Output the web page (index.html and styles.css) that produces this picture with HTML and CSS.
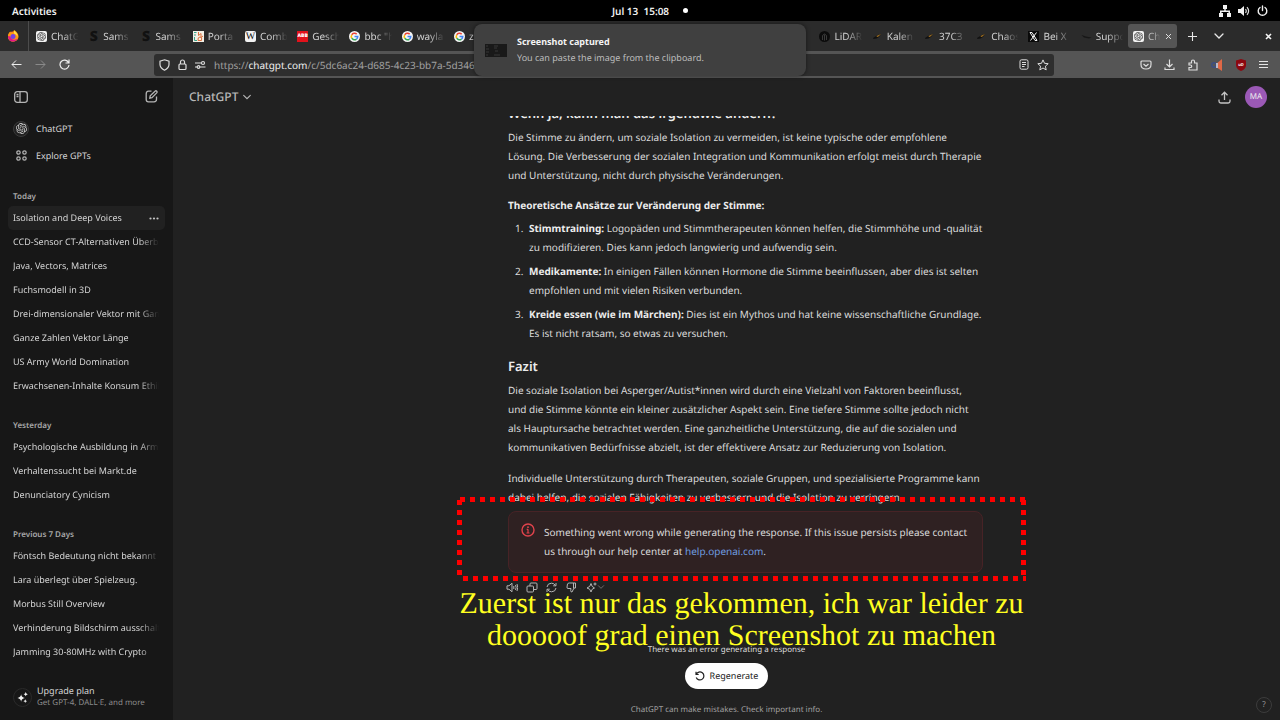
FILE: index.html
```html
<!DOCTYPE html>
<html lang="de">
<head>
<meta charset="utf-8">
<title>ChatGPT</title>
<link rel="stylesheet" href="styles.css">
</head>
<body>
<svg class="defs" aria-hidden="true">
  <symbol id="gpt" viewBox="0 0 24 24"><path fill="currentColor" d="M22.2819 9.8211a5.9847 5.9847 0 0 0-.5157-4.9108 6.0462 6.0462 0 0 0-6.5098-2.9A6.0651 6.0651 0 0 0 4.9807 4.1818a5.9847 5.9847 0 0 0-3.9977 2.9 6.0462 6.0462 0 0 0 .7427 7.0966 5.98 5.98 0 0 0 .511 4.9107 6.051 6.051 0 0 0 6.5146 2.9001A5.9847 5.9847 0 0 0 13.2599 24a6.0557 6.0557 0 0 0 5.7718-4.2058 5.9894 5.9894 0 0 0 3.9977-2.9001 6.0557 6.0557 0 0 0-.7475-7.0729zm-9.022 12.6081a4.4755 4.4755 0 0 1-2.8764-1.0408l.1419-.0804 4.7783-2.7582a.7948.7948 0 0 0 .3927-.6813v-6.7369l2.02 1.1686a.071.071 0 0 1 .038.052v5.5826a4.504 4.504 0 0 1-4.4945 4.4944zm-9.6607-4.1254a4.4708 4.4708 0 0 1-.5346-3.0137l.142.0852 4.783 2.7582a.7712.7712 0 0 0 .7806 0l5.8428-3.3685v2.3324a.0804.0804 0 0 1-.0332.0615L9.74 19.9502a4.4992 4.4992 0 0 1-6.1408-1.6464zM2.3408 7.8956a4.485 4.485 0 0 1 2.3655-1.9728V11.6a.7664.7664 0 0 0 .3879.6765l5.8144 3.3543-2.0201 1.1685a.0757.0757 0 0 1-.071 0l-4.8303-2.7865A4.504 4.504 0 0 1 2.3408 7.872zm16.5963 3.8558L13.1038 8.364 15.1192 7.2a.0757.0757 0 0 1 .071 0l4.8303 2.7913a4.4944 4.4944 0 0 1-.6765 8.1042v-5.6772a.79.79 0 0 0-.407-.667zm2.0107-3.0231l-.142-.0852-4.7735-2.7818a.7759.7759 0 0 0-.7854 0L9.409 9.2297V6.8974a.0662.0662 0 0 1 .0284-.0615l4.8303-2.7866a4.4992 4.4992 0 0 1 6.6802 4.66zM8.3065 12.863l-2.02-1.1638a.0804.0804 0 0 1-.038-.0567V6.0742a4.4992 4.4992 0 0 1 7.3757-3.4537l-.142.0805L8.704 5.459a.7948.7948 0 0 0-.3927.6813zm1.0976-2.3654l2.602-1.4998 2.6069 1.4998v2.9994l-2.5974 1.4997-2.6067-1.4997Z"/></symbol>
  <symbol id="google" viewBox="0 0 22 22"><circle cx="11" cy="11" r="11" fill="#f4f4f4"/><g fill="none" stroke-width="3"><path stroke="#ea4335" d="M5.5 7.6A6.5 6.5 0 0 1 15.4 6.2"/><path stroke="#fbbc05" d="M5.5 14.4A6.5 6.5 0 0 1 5.5 7.6"/><path stroke="#34a853" d="M5.5 14.4A6.5 6.5 0 0 0 15 16.1"/><path stroke="#4285f4" d="M11 11h6.5a6.5 6.5 0 0 1-2.5 5.1"/></g></symbol>
  <symbol id="rocket" viewBox="0 0 22 22"><path fill="#111" d="M2 14l8-5 8-3-4 6-5 3-6 1z"/><path fill="#a87522" d="M9 10l9-4-5 5-3 1z"/></symbol>
  <symbol id="chev" viewBox="0 0 12 12"><path d="M2 4l4 4 4-4" fill="none" stroke="currentColor" stroke-width="1.3" stroke-linecap="round"/></symbol>
</svg>

<header class="topbar">
  <button class="activities">Activities</button>
  <div class="clock"><span>Jul 13&nbsp; 15:08</span><i class="dot"></i></div>
  <div class="tray">
    <svg width="12" height="12" viewBox="0 0 12 12" fill="#f2f2f2"><path d="M4 0h4v4H6.700v1.500H11V8h1v4H8V8h1.500V7h-7v1H4v4H0V8h1V5.500h4.300V4H4z"/></svg>
    <svg width="12" height="12" viewBox="0 0 12 12"><path d="M0 4h2.500L6 1v10L2.500 8H0z" fill="#f2f2f2"/><path d="M7.500 4q1.500 2 0 4M9 2.200q3.200 3.800 0 7.600" fill="none" stroke="#e0e0e0" stroke-width="1.200"/></svg>
    <svg width="11" height="12" viewBox="0 0 11 12" fill="none" stroke="#f2f2f2" stroke-width="1.400" stroke-linecap="round"><path d="M5.500 1v4.500M3 2.500a4.300 4.300 0 1 0 5 0"/></svg>
  </div>
</header>

<nav class="tabs" aria-label="Tabs">
  <button class="pinned" aria-label="Firefox"><svg width="12" height="12" viewBox="0 0 24 24"><circle cx="12" cy="13" r="10" fill="#ff7139"/><path d="M2 13C2 7 5 4 7 3l1 3c3-1 5-2 6-6 4 2 9 7 9 13 0 6-5 10-11 10S2 19 2 13z" fill="#ff980e"/><path d="M2 12c0 7 4 11 10 11 5 0 8-3 10-6-6 4-14 3-15-4z" fill="#e31587"/><circle cx="12" cy="13" r="5" fill="#7542e5"/><path d="M14 1c4 3 8 7 7 13-1-4-4-6-7-7z" fill="#ffe14c"/></svg></button>
  <button class="tab"><span class="fav white"><svg width="9" height="9"><use href="#gpt"/></svg></span><span class="t">ChatG</span></button>
  <button class="tab"><span class="fav s">S</span><span class="t">Sams</span></button>
  <button class="tab"><span class="fav s">S</span><span class="t">Sams</span></button>
  <button class="tab"><span class="fav"><svg width="11" height="11" viewBox="0 0 22 22"><path fill="#f3efe5" d="M0 0h22v22H0z"/><path d="M2 3h5M2 8h4M3 12v7h5" stroke="#37a58c" stroke-width="2" fill="none"/><path d="M11 2v7l5-4v8l4-3M10 19q-1-7 4-7t3 7z" stroke="#dd713e" stroke-width="2" fill="none"/></svg></span><span class="t">Porta</span></button>
  <button class="tab"><span class="fav white w">W</span><span class="t">Comb</span></button>
  <button class="tab"><span class="fav abb">ABB</span><span class="t">Gesch</span></button>
  <button class="tab"><span class="fav"><svg width="11" height="11"><use href="#google"/></svg></span><span class="t">bbc "h</span></button>
  <button class="tab"><span class="fav"><svg width="11" height="11"><use href="#google"/></svg></span><span class="t">wayla</span></button>
  <button class="tab"><span class="fav"><svg width="11" height="11"><use href="#google"/></svg></span><span class="t">z</span></button>
  <span class="tabgap"></span>
  <button class="tab"><span class="fav"><svg width="11" height="11" viewBox="0 0 22 22"><circle cx="11" cy="11" r="11" fill="#0c0c0c"/><path d="M7 18V9q4-6 8 0v9M11 7v12" stroke="#3a3a3a" stroke-width="2" fill="none"/></svg></span><span class="t">LiDAR</span></button>
  <button class="tab"><span class="fav"><svg width="11" height="11"><use href="#rocket"/></svg></span><span class="t">Kalen</span></button>
  <button class="tab"><span class="fav"><svg width="11" height="11"><use href="#rocket"/></svg></span><span class="t">37C3</span></button>
  <button class="tab"><span class="fav"><svg width="11" height="11"><use href="#rocket"/></svg></span><span class="t">Chaos</span></button>
  <button class="tab"><span class="fav"><svg width="11" height="11" viewBox="0 0 22 22"><path d="M0 0h22v22H0z" fill="#0a0a0a"/><path d="M4 3h4l10 16h-4zM17 3L5 19" stroke="#f4f4f4" stroke-width="2" fill="none"/></svg></span><span class="t">Bei X</span></button>
  <button class="tab"><span class="fav"><svg width="11" height="11" viewBox="0 0 22 22"><path d="M1 8l9 3 11 2-5 2-10-2z" fill="#171717"/></svg></span><span class="t">Suppo</span></button>
  <button class="tab active"><span class="fav white"><svg width="9" height="9"><use href="#gpt"/></svg></span><span class="t">Ch</span><svg class="x" width="7" height="7" viewBox="0 0 7 7"><path d="M1 1l5 5M6 1L1 6" stroke="#ddd"/></svg></button>
  <div class="tabtools">
    <svg width="9" height="9" viewBox="0 0 9 9"><path d="M4.500 0v9M0 4.500h9" stroke="#e8e8e8" stroke-width="1.100"/></svg>
    <svg width="12" height="12" color="#e8e8e8"><use href="#chev"/></svg>
    <svg class="winx" width="7" height="7" viewBox="0 0 7 7"><path d="M1 1l5 5M6 1L1 6" stroke="#f4f4f4" stroke-width="1.600"/></svg>
  </div>
</nav>

<div class="toolbar">
  <div class="navbtns">
    <svg width="11" height="11" viewBox="0 0 11 11" fill="none" stroke="#eee"><path d="M10.500 5.500H1M5 1.500l-4 4 4 4"/></svg>
    <svg width="11" height="11" viewBox="0 0 11 11" fill="none" stroke="#8a8a8a"><path d="M.5 5.500H10M6 1.500l4 4-4 4"/></svg>
    <svg width="11" height="11" viewBox="0 0 11 11" fill="none" stroke="#eee" stroke-width="1.200"><path d="M9.500 3.500A4.500 4.500 0 1 0 10 6M10 .5V4H6.500"/></svg>
  </div>
  <div class="url">
    <svg width="11" height="12" viewBox="0 0 11 12" fill="none" stroke="#ddd" stroke-width="1.200"><path d="M5.500.800L10 2.200v3.300q0 3.500-4.500 5.700Q1 9 1 5.500V2.200z"/></svg>
    <svg width="9" height="12" viewBox="0 0 9 12" fill="none" stroke="#ddd" stroke-width="1.200"><rect x="1" y="5" width="7" height="5.500" rx="1"/><path d="M2.500 5V3a2 2 0 0 1 4 0v2"/></svg>
    <svg width="11" height="10" viewBox="0 0 11 10" fill="none" stroke="#ddd" stroke-width="1.200"><path d="M0 3h6M5 7h5.500M0 7h2"/><circle cx="8" cy="3" r="1.500"/><circle cx="3.500" cy="7" r="1.300"/></svg>
    <span class="addr">https://<b>chatgpt.com</b>/c/5dc6ac24-d685-4c23-bb7a-5d346</span>
    <svg width="10" height="11" viewBox="0 0 10 11" fill="none" stroke="#ddd"><rect x="1" y=".8" width="8" height="9.400" rx="1.500"/><path d="M3 3.500h4M3 5.500h4M3 7.500h2.500"/></svg>
    <svg width="12" height="12" viewBox="0 0 12 12" fill="none" stroke="#ddd"><path stroke-linejoin="round" d="M6 .900l1.500 3.400 3.700.4-2.800 2.500.8 3.700L6 9l-3.200 1.900.8-3.700L.8 4.700l3.700-.4z"/></svg>
  </div>
  <div class="exts">
    <svg width="12" height="12" viewBox="0 0 12 12" fill="none" stroke="#ddd" stroke-width="1.200"><path d="M2 2h8q1 0 1 1v2.500q0 4.500-5 4.500T1 5.500V3q0-1 1-1zM3.500 5L6 7.200 8.500 5"/></svg>
    <svg width="11" height="12" viewBox="0 0 11 12" fill="none" stroke="#ddd" stroke-width="1.200"><path d="M5.500.5v7M2.500 5l3 3 3-3M1 8.500v2h9v-2"/></svg>
    <svg width="12" height="12" viewBox="0 0 12 12" fill="none" stroke="#ddd" stroke-width="1.200"><path d="M2 4h2.500V2.500a1.500 1.500 0 0 1 3 0V4H10v7H2V8.500h1.500a1.200 1.200 0 0 0 0-2.500H2z"/></svg>
    <svg width="12" height="12" viewBox="0 0 12 12"><circle cx="3" cy="6" r="2.200" fill="none" stroke="#3c4e83" stroke-width="1.500"/><path d="M5 5l6-5v12L5 8z" fill="#e06846"/><path d="M5 4h2v5H5z" fill="#b9b9c8"/></svg>
    <svg width="12" height="12" viewBox="0 0 12 12"><path d="M6 0l5 1.500V6q0 4-5 6-5-2-5-6V1.500z" fill="#8c0810"/><text x="6" y="7" text-anchor="middle" fill="#fff" class="ud">uD</text></svg>
    <svg width="10" height="10" viewBox="0 0 10 10" stroke="#e4e4e4"><path d="M0 1.500h9M0 4.500h9M0 7.500h9"/></svg>
  </div>
</div>

<div class="app">
  <aside class="sidebar">
    <div class="sidetop">
      <svg width="14" height="12" viewBox="0 0 14 12" fill="none" stroke="#b4b4b4" stroke-width="1.300"><rect x=".7" y=".7" width="12.600" height="10.600" rx="2.500"/><path d="M6 1v10M2.500 3.500h2M2.500 5.500h2"/></svg>
      <svg width="13" height="13" viewBox="0 0 13 13" fill="none" stroke="#b4b4b4" stroke-width="1.300"><path d="M6.500 1.200H3.500Q1.200 1.200 1.200 4v5.500q0 2.300 2.300 2.300H9q2.500 0 2.500-2.500V6.500"/><path d="M4.800 8.200l.4-2.300L10 1.200q1-.8 1.700 0t0 1.700L7 7.700z"/></svg>
    </div>
    <a class="gpt" href="#"><span class="ring"><svg width="11" height="11"><use href="#gpt"/></svg></span>ChatGPT</a>
    <a class="gpt" href="#"><span class="ico"><svg width="11" height="11" viewBox="0 0 11 11" fill="none" stroke="#b4b4b4" stroke-width="1.200"><circle cx="2.500" cy="2.500" r="1.700"/><circle cx="8.500" cy="2.500" r="1.700"/><circle cx="2.500" cy="8.500" r="1.700"/><circle cx="8.500" cy="8.500" r="1.700"/></svg></span>Explore GPTs</a>
    <section class="group">
      <h4>Today</h4>
      <a class="chat current" href="#"><span>Isolation and Deep Voices</span><svg width="10" height="3" viewBox="0 0 10 3" fill="#c4c4c4"><circle cx="1.500" cy="1.500" r="1.100"/><circle cx="5" cy="1.500" r="1.100"/><circle cx="8.500" cy="1.500" r="1.100"/></svg></a>
      <a class="chat" href="#"><span>CCD-Sensor CT-Alternativen Überblick</span></a>
      <a class="chat" href="#"><span>Java, Vectors, Matrices</span></a>
      <a class="chat" href="#"><span>Fuchsmodell in 3D</span></a>
      <a class="chat" href="#"><span>Drei-dimensionaler Vektor mit Ganzen</span></a>
      <a class="chat" href="#"><span>Ganze Zahlen Vektor Länge</span></a>
      <a class="chat" href="#"><span>US Army World Domination</span></a>
      <a class="chat" href="#"><span>Erwachsenen-Inhalte Konsum Ethik</span></a>
    </section>
    <section class="group">
      <h4>Yesterday</h4>
      <a class="chat" href="#"><span>Psychologische Ausbildung in Armee</span></a>
      <a class="chat" href="#"><span>Verhaltenssucht bei Markt.de</span></a>
      <a class="chat" href="#"><span>Denunciatory Cynicism</span></a>
    </section>
    <section class="group">
      <h4>Previous 7 Days</h4>
      <a class="chat" href="#"><span>Föntsch Bedeutung nicht bekannt</span></a>
      <a class="chat" href="#"><span>Lara überlegt über Spielzeug.</span></a>
      <a class="chat" href="#"><span>Morbus Still Overview</span></a>
      <a class="chat" href="#"><span>Verhinderung Bildschirm ausschalten</span></a>
      <a class="chat" href="#"><span>Jamming 30-80MHz with Crypto</span></a>
    </section>
    <a class="upgrade" href="#">
      <span class="ring big"><svg width="11" height="11" viewBox="0 0 12 12" fill="#f0f0f0"><path d="M4.500 2.500Q5 6 8.500 6.500 5 7 4.500 10.500 4 7 .5 6.500 4 6 4.500 2.500zM9.500 0q.3 2 2.300 2.400-2 .3-2.300 2.300-.3-2-2.300-2.300 2-.4 2.300-2.400zM9 8q.2 1.700 2 2-1.800.2-2 2-.2-1.800-2-2 1.800-.3 2-2z"/></svg></span>
      <span class="uptext"><span>Upgrade plan</span><small>Get GPT-4, DALL·E, and more</small></span>
    </a>
  </aside>

  <main class="main">
    <div class="mainhead">
      <button class="model">ChatGPT <svg width="10" height="10"><use href="#chev"/></svg></button>
      <div class="acct">
        <svg width="13" height="13" viewBox="0 0 13 13" fill="none" stroke="#c4c4c4" stroke-width="1.300"><path d="M6.500 9V1.500M3.500 4.200l3-3 3 3M1 8.500v1.700q0 1.800 1.800 1.800h7.400q1.800 0 1.800-1.800V8.500"/></svg>
        <button class="avatar">MA</button>
      </div>
    </div>
    <div class="scroll">
      <article class="msg">
        <h3>Wenn ja, kann man das irgendwie ändern?</h3>
        <p>Die Stimme zu ändern, um soziale Isolation zu vermeiden, ist keine typische oder empfohlene<br>Lösung. Die Verbesserung der sozialen Integration und Kommunikation erfolgt meist durch Therapie<br>und Unterstützung, nicht durch physische Veränderungen.</p>
        <p class="lead"><strong>Theoretische Ansätze zur Veränderung der Stimme:</strong></p>
        <ol>
          <li><strong>Stimmtraining:</strong> Logopäden und Stimmtherapeuten können helfen, die Stimmhöhe und -qualität<br>zu modifizieren. Dies kann jedoch langwierig und aufwendig sein.</li>
          <li><strong>Medikamente:</strong> In einigen Fällen können Hormone die Stimme beeinflussen, aber dies ist selten<br>empfohlen und mit vielen Risiken verbunden.</li>
          <li><strong>Kreide essen (wie im Märchen):</strong> Dies ist ein Mythos und hat keine wissenschaftliche Grundlage.<br>Es ist nicht ratsam, so etwas zu versuchen.</li>
        </ol>
        <h3>Fazit</h3>
        <p>Die soziale Isolation bei Asperger/Autist*innen wird durch eine Vielzahl von Faktoren beeinflusst,<br>und die Stimme könnte ein kleiner zusätzlicher Aspekt sein. Eine tiefere Stimme sollte jedoch nicht<br>als Hauptursache betrachtet werden. Eine ganzheitliche Unterstützung, die auf die sozialen und<br>kommunikativen Bedürfnisse abzielt, ist der effektivere Ansatz zur Reduzierung von Isolation.</p>
        <p class="last">Individuelle Unterstützung durch Therapeuten, soziale Gruppen, und spezialisierte Programme kann<br>dabei helfen, die sozialen Fähigkeiten zu verbessern und die Isolation zu verringern.</p>
        <div class="alert" role="alert">
          <svg width="14" height="14" viewBox="0 0 14 14"><circle cx="7" cy="7" r="6" fill="none" stroke="#e0434c" stroke-width="1.400"/><path d="M7 6.200v4M5.700 6.400H7M5.500 10h3" stroke="#e0434c" stroke-width="1.200"/><circle cx="7" cy="4.200" r=".9" fill="#e0434c"/></svg>
          <div>Something went wrong while generating the response. If this issue persists please contact<br>us through our help center at <a href="#">help.openai.com</a>.</div>
        </div>
        <div class="actions">
          <svg width="12" height="11" viewBox="0 0 12 11"><path d="M1 3.800h2L6 1.200v8.600L3 7.200H1zM7.800 4v3M9.500 3q1.300 2.500 0 5M11 2q1.500 3.500 0 7"/></svg>
          <svg width="12" height="11" viewBox="0 0 12 11"><rect x="1" y="4" width="6.500" height="6" rx="1"/><path d="M4 4V2q0-1 1-1h5q1 0 1 1v4.500q0 1-1 1H7.500"/></svg>
          <svg width="12" height="11" viewBox="0 0 12 11"><path d="M1 5Q1.500 1.200 5.500 1.200 8 1.200 9.500 3.500M10 1v2.800H7.200M10 6q-.5 3.800-4.500 3.800Q3 9.800 1.500 7.500M1 10V7.200h2.800"/></svg>
          <svg width="12" height="11" viewBox="0 0 12 11"><path d="M3.500 1H9.500v5H8L6 10q-1.500 0-1.300-1.500L5 6.500H2Q.8 6.500 1 5l.5-3Q1.800 1 3.500 1zM7.500 1v5"/></svg>
          <span class="pair"><svg width="11" height="11" viewBox="0 0 11 11"><path d="M5 1.500Q5.500 5 8.500 6 5.500 6.500 5 10 4.500 6.500 1 6 4.500 5 5 1.500zM9 .5v3M7.500 2h3"/></svg><svg width="8" height="8" class="dim"><use href="#chev"/></svg></span>
        </div>
      </article>
    </div>
    <footer class="foot">
      <div class="err">There was an error generating a response</div>
      <button class="regen"><svg width="10" height="10" viewBox="0 0 10 10" fill="none" stroke="#222" stroke-width="1.200"><path d="M1 .8v2.700h2.700M1.200 3.400A4 4 0 1 1 1.200 6.500"/></svg>Regenerate</button>
      <div class="note">ChatGPT can make mistakes. Check important info.</div>
    </footer>
    <button class="help">?</button>
    <div class="annotation">
      <svg width="570" height="84" viewBox="0 0 570 84" fill="none" stroke="#ff0000" stroke-width="5" stroke-dasharray="5 5"><path d="M3 2.500H569"/><path d="M2.500 3V80"/><path d="M6 81.500H569"/><path d="M566.500 3V80"/></svg>
      <p>Zuerst ist nur das gekommen, ich war leider zu<br>dooooof grad einen Screenshot zu machen</p>
    </div>
  </main>
</div>

<div class="toast" role="status">
  <svg width="22" height="13" viewBox="0 0 22 13"><path d="M0 0h22v13H0z" fill="#191919"/><path d="M9 2h4M9 4h3M10 7h3M9 11h6M1 2h2M1 5h3M1 8h3M1 11h2" stroke="#383838"/></svg>
  <div><strong>Screenshot captured</strong><span>You can paste the image from the clipboard.</span></div>
</div>
</body>
</html>
```
FILE: styles.css
```css
* { box-sizing: border-box; }
body {
  margin: 0;
  height: 100vh;
  display: flex;
  flex-direction: column;
  overflow: hidden;
  background: #212121;
  color: #dcdcdc;
  font: 10px/16px "Noto Sans", sans-serif;
  text-rendering: geometricPrecision;
}
button { font: inherit; color: inherit; background: none; border: 0; padding: 0; text-rendering: inherit; }
a { color: inherit; text-decoration: none; }
h3, h4, p, ol { margin: 0; }
svg { flex: none; display: block; }
.defs { position: absolute; width: 0; height: 0; }

.topbar {
  flex: none;
  height: 21px;
  display: grid;
  grid-template-columns: 1fr auto 1fr;
  align-items: center;
  padding: 0 12px;
  background: #000;
  color: #f0f0f0;
  font-weight: 600;
}
.activities { justify-self: start; }
.clock { display: flex; align-items: center; gap: 14px; padding-left: 20px; }
.dot { width: 5px; height: 5px; border-radius: 50%; background: #fff; }
.tray { justify-self: end; display: flex; gap: 7px; }

.tabs {
  flex: none;
  height: 30px;
  display: flex;
  align-items: center;
  background: #2b2b2b;
  color: #d0d0d0;
}
.pinned {
  width: 29px;
  height: 30px;
  margin-right: 2px;
  padding-left: 7px;
  border-right: 1px solid #4c4c4c;
}
.tab {
  flex: 1 1 0;
  min-width: 0;
  height: 24px;
  margin-right: 3px;
  padding-left: 5px;
  display: flex;
  align-items: center;
  gap: 4px;
  text-align: left;
}
.tab.active { background: #555; border-radius: 3px; }
.tab.active .t { flex: none; width: 13px; color: #bbb; }
.tabgap { flex: 6 1 48px; }
.t {
  flex: 1;
  overflow: hidden;
  white-space: nowrap;
  -webkit-mask-image: linear-gradient(90deg, #000 40%, transparent 95%);
  mask-image: linear-gradient(90deg, #000 40%, transparent 95%);
}
.fav {
  flex: none;
  width: 11px;
  height: 11px;
  display: flex;
  align-items: center;
  justify-content: center;
  border-radius: 2px;
  line-height: 11px;
}
.white { background: #f2f2f2; color: #333; }
.s { color: #111; font-weight: 900; font-size: 14px; }
.w { color: #111; font-family: "Liberation Serif", serif; font-size: 10px; }
.abb { background: #e1121b; color: #fff; font-weight: 900; font-size: 5px; border-radius: 0; }
.tabtools { flex: none; width: 100px; display: flex; align-items: center; padding: 0 8px; gap: 16px; }
.winx { margin-left: auto; }

.toolbar {
  flex: none;
  height: 27px;
  display: flex;
  align-items: center;
  background: #555;
}
.navbtns { flex: 0 0 154px; display: flex; gap: 13px; padding-left: 11px; }
.url {
  flex: 1;
  height: 22px;
  display: flex;
  align-items: center;
  gap: 8px;
  padding: 0 5px;
  border-radius: 3px;
  background: #2e2e2e;
}
.addr { flex: 1; color: #a0a0a0; font-size: 10px; }
.addr b { font-weight: 400; color: #f0f0f0; }
.exts {
  flex: 0 0 226px;
  display: flex;
  align-items: center;
  justify-content: flex-end;
  gap: 12px;
  padding-right: 11px;
}
.ud { font: 700 4px "Noto Sans", sans-serif; }

.app { flex: 1; min-height: 0; display: flex; }
.sidebar {
  flex: 0 0 173px;
  min-width: 0;
  display: flex;
  flex-direction: column;
  padding: 0 8px;
  background: #171717;
  font-size: 9px;
  color: #d4d4d4;
}
.sidetop {
  height: 37px;
  display: flex;
  align-items: center;
  justify-content: space-between;
  padding: 0 7px 0 6px;
}
.gpt { height: 27px; display: flex; align-items: center; gap: 7px; padding-left: 5px; }
.ring, .ico { flex: none; width: 16px; height: 16px; display: grid; place-items: center; }
.ring { border: 1px solid #3a3a3a; border-radius: 50%; background: #212121; }
.ring.big { width: 19px; height: 19px; background: none; border-color: #2a2a2a; }
.group { padding-top: 20px; }
.group h4 { padding: 0 5px; margin-bottom: 1px; font-size: 8px; line-height: 16px; font-weight: 600; color: #a8a8a8; }
.chat {
  height: 24px;
  display: flex;
  align-items: center;
  justify-content: space-between;
  padding: 0 6px 0 5px;
  border-radius: 5px;
}
.chat span {
  flex: 1;
  min-width: 0;
  overflow: hidden;
  white-space: nowrap;
  -webkit-mask-image: linear-gradient(90deg, #000 86%, transparent);
  mask-image: linear-gradient(90deg, #000 86%, transparent);
}
.current { background: #212121; }
.upgrade { margin: auto 0 11px; display: flex; align-items: center; gap: 5px; padding-left: 5px; }
.uptext { display: flex; flex-direction: column; line-height: 12px; }
.uptext small { font-size: 8px; color: #8b8b8b; }

.main { position: relative; flex: 1; min-width: 0; display: flex; flex-direction: column; }
.mainhead {
  flex: none;
  height: 38px;
  display: flex;
  align-items: center;
  justify-content: space-between;
  padding: 0 13px 0 16px;
}
.model { display: flex; align-items: center; gap: 4px; color: #b8b8b8; font-size: 12px; font-weight: 500; }
.acct { display: flex; align-items: center; gap: 14px; }
.avatar { width: 22px; height: 22px; border-radius: 50%; background: #9b59b6; color: #eee; font-size: 8px; }
.scroll {
  flex: 1;
  min-height: 0;
  display: flex;
  flex-direction: column;
  justify-content: flex-end;
  align-items: center;
  overflow: hidden;
}
.msg {
  width: 100%;
  max-width: 475px;
  margin-left: 38px;
  line-height: 19px;
  white-space: nowrap;
}
.msg h3 { margin: 13px 0 5px; font-size: 13px; line-height: 20px; font-weight: 600; color: #ececec; }
.msg strong { font-weight: 700; color: #ececec; }
.lead { margin: 11px 0 4px; }
.msg ol { padding-left: 18px; display: grid; gap: 5px; }
.msg li { padding-left: 3px; }
.last { margin-top: 12px; }
.alert {
  display: flex;
  gap: 9px;
  margin-top: 4px;
  padding: 11px 12px;
  border: 1px solid #472326;
  border-radius: 8px;
  background: #2f2122;
}
.alert a { color: #6f9ee0; }
.actions { display: flex; align-items: center; gap: 8px; height: 28px; margin-left: -2px; }
.actions svg { fill: none; stroke: #b4b4b4; stroke-width: 1; }
.pair { display: flex; align-items: center; color: #b4b4b4; }
.dim { opacity: .6; }
.foot {
  flex: none;
  padding-top: 43px;
  display: flex;
  flex-direction: column;
  align-items: center;
}
.err { font-size: 8px; line-height: 12px; margin-bottom: 7px; }
.regen {
  height: 26px;
  display: flex;
  align-items: center;
  gap: 5px;
  padding: 0 10px;
  border-radius: 13px;
  background: #fff;
  color: #222;
  font-size: 9px;
}
.note { margin: 14px 0 3px; font-size: 8px; line-height: 14px; color: #a0a0a0; }
.help {
  position: absolute;
  right: 8px;
  bottom: 7px;
  width: 16px;
  height: 16px;
  border: 1px solid #3c3c3c;
  border-radius: 50%;
  color: #9a9a9a;
  font-size: 8px;
  line-height: 12px;
}
.annotation {
  position: absolute;
  left: 30px;
  right: 0;
  bottom: 68px;
  display: flex;
  flex-direction: column;
  align-items: center;
  gap: 7px;
  pointer-events: none;
}
.annotation p {
  text-align: center;
  white-space: nowrap;
  font: 30px/32px "Liberation Serif", serif;
  color: #ffff20;
}

.toast {
  position: absolute;
  top: 24px;
  left: 50%;
  width: 332px;
  height: 52px;
  margin-left: -166px;
  display: flex;
  align-items: center;
  gap: 10px;
  padding-left: 11px;
  border-radius: 8px;
  background: #404040;
  color: #bdbdbd;
  font-size: 9px;
  box-shadow: 0 0 4px rgba(0, 0, 0, .5);
  z-index: 3;
}
.toast div { display: flex; flex-direction: column; }
.toast strong { color: #f4f4f4; }
```
